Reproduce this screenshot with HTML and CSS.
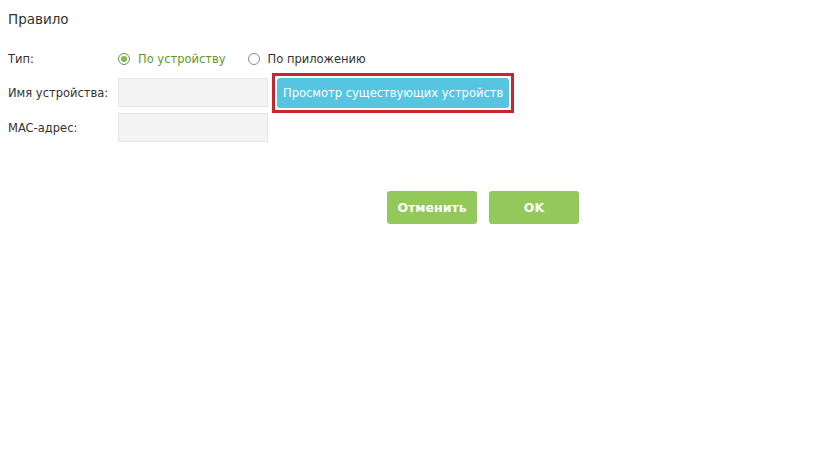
FILE: index.html
```html
<!DOCTYPE html>
<html lang="ru">
<head>
<meta charset="utf-8">
<link rel="stylesheet" href="styles.css">
</head>
<body>
<div class="page">
  <div class="title">Правило</div>
  <div class="form">
    <div class="row row-type">
      <div class="label">Тип:</div>
      <div class="radios">
        <label class="radio checked"><span class="dot"></span><span class="rtext">По устройству</span></label>
        <label class="radio"><span class="dot"></span><span class="rtext">По приложению</span></label>
      </div>
    </div>
    <div class="row">
      <div class="label">Имя устройства:</div>
      <div class="input"></div>
      <div class="highlight"><button class="btn-view">Просмотр существующих устройств</button></div>
    </div>
    <div class="row">
      <div class="label">MAC-адрес:</div>
      <div class="input"></div>
    </div>
  </div>
  <div class="actions">
    <button class="btn-green">Отменить</button>
    <button class="btn-green">OK</button>
  </div>
</div>
</body>
</html>
```
FILE: styles.css
```css
html, body {
  margin: 0;
  padding: 0;
  background: #ffffff;
}
.page {
  font-family: "DejaVu Sans", Verdana, sans-serif;
  color: #333333;
  padding: 11px 0 0 8px;
}
.title {
  font-size: 13.5px;
  line-height: 16px;
}
.form {
  margin-top: 24px;
  display: flex;
  flex-direction: column;
}
.row {
  display: flex;
  align-items: center;
  height: 29px;
  margin-bottom: 6px;
}
.row-type {
  height: 16px;
  margin-bottom: 11px;
}
.label {
  width: 110px;
  font-size: 11.5px;
}
.radios {
  display: flex;
  align-items: center;
  gap: 22px;
}
.radio {
  display: flex;
  align-items: center;
  font-size: 11.5px;
  color: #333333;
}
.radio .dot {
  width: 10px;
  height: 10px;
  border: 1px solid #8a8a8a;
  border-radius: 50%;
  margin-right: 8px;
  display: flex;
  align-items: center;
  justify-content: center;
}
.radio.checked .dot {
  border-color: #6f8f55;
}
.radio.checked .dot::after {
  content: "";
  width: 6px;
  height: 6px;
  border-radius: 50%;
  background: #7cbb4c;
}
.radio.checked .rtext {
  color: #5e9a2c;
}
.input {
  width: 148px;
  height: 27px;
  background: #f4f4f4;
  border: 1px solid #e6e6e6;
}
.highlight {
  margin-left: 4px;
  border: 3px solid #c8252c;
  padding: 2px;
  display: flex;
}
.btn-view {
  font-family: "DejaVu Sans", Verdana, sans-serif;
  font-size: 11.5px;
  color: #ffffff;
  background: #56c5e1;
  border: none;
  border-radius: 3px;
  height: 30px;
  padding: 0 6px;
  margin: 0;
}
.actions {
  margin-top: 43px;
  margin-left: 379px;
  display: flex;
  gap: 12px;
}
.btn-green {
  font-family: "DejaVu Sans", Verdana, sans-serif;
  font-size: 12.5px;
  font-weight: bold;
  color: #ffffff;
  background: #93c95a;
  border: none;
  border-radius: 3px;
  width: 90px;
  height: 33px;
  margin: 0;
  padding: 0;
}
```
